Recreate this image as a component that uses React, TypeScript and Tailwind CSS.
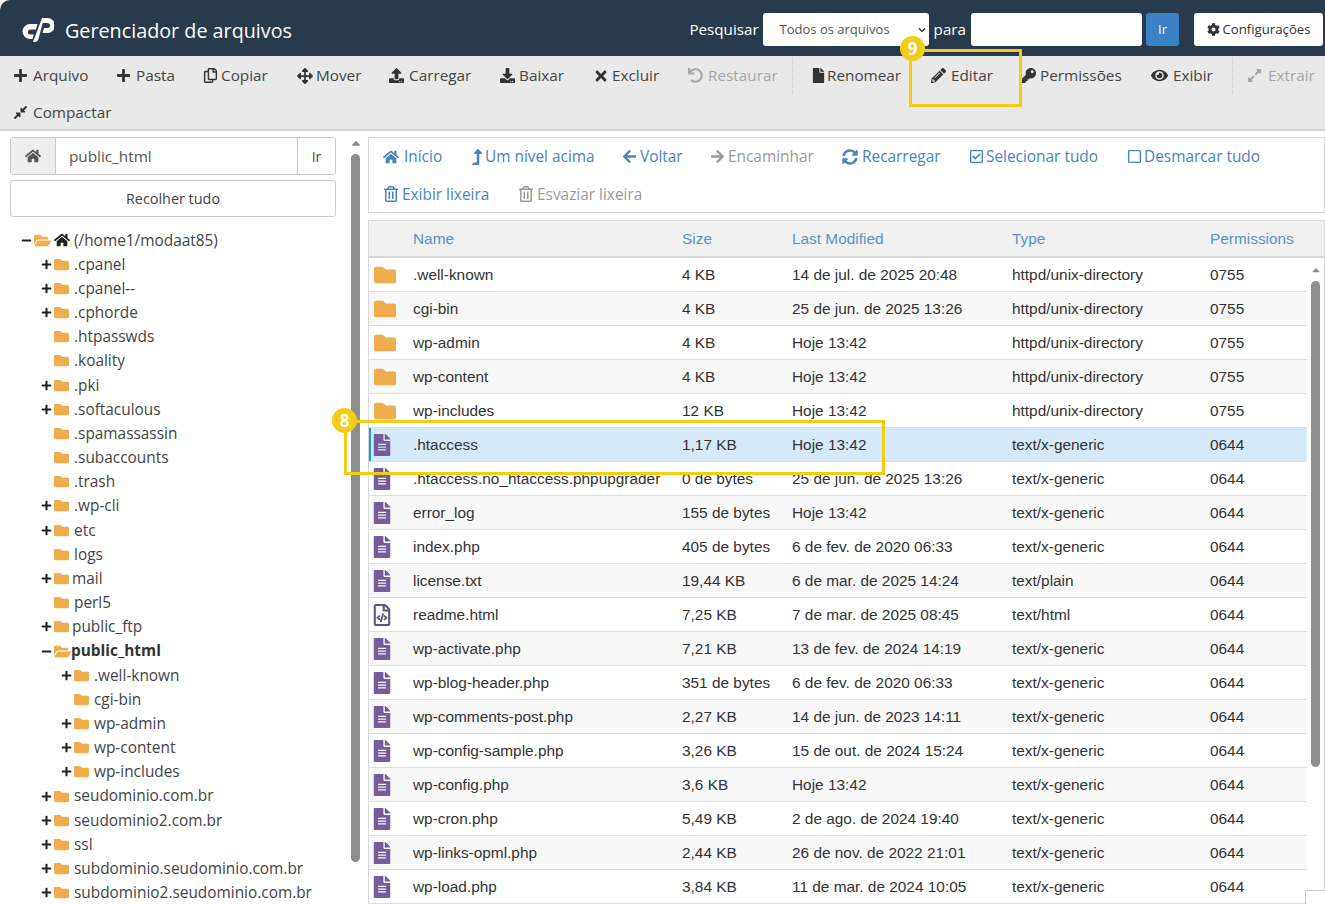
import React from "react";
import {
  FaPlus, FaRegCopy, FaArrowsAlt, FaUpload, FaDownload, FaTimes, FaUndo, FaFile, FaPencilAlt, FaKey, FaEye,
  FaExpandAlt, FaCompressAlt, FaCog, FaHome, FaLevelUpAlt, FaArrowLeft, FaArrowRight, FaSyncAlt, FaRegCheckSquare,
  FaRegSquare, FaRegTrashAlt, FaFolder, FaFolderOpen, FaFileAlt, FaRegFileCode, FaMinus, FaCaretUp, FaChevronDown,
} from "react-icons/fa";

const tools: { icon: React.ReactNode; label: string; w: string; slot: string; off?: boolean; sep?: boolean }[] = [
  { icon: <FaPlus />, label: "Arquivo", w: "w-[103px]", slot: "w-[20px] text-[15px]" },
  { icon: <FaPlus />, label: "Pasta", w: "w-[87px]", slot: "w-[20px] text-[15px]" },
  { icon: <FaRegCopy />, label: "Copiar", w: "w-[94px]", slot: "w-[18px] text-[15px]" },
  { icon: <FaArrowsAlt />, label: "Mover", w: "w-[92px]", slot: "w-[19px] text-[16px]" },
  { icon: <FaUpload />, label: "Carregar", w: "w-[111px]", slot: "w-[20px] text-[15px]" },
  { icon: <FaDownload />, label: "Baixar", w: "w-[94px]", slot: "w-[19px] text-[15px]" },
  { icon: <FaTimes />, label: "Excluir", w: "w-[94px]", slot: "w-[19px] text-[16px] -ml-[1px]" },
  { icon: <FaUndo />, label: "Restaurar", w: "w-[105px]", slot: "w-[20px] text-[15px]", off: true, sep: true },
  { icon: <FaFile />, label: "Renomear", w: "w-[138px] pl-[19px]", slot: "w-[16px] text-[15px] -ml-[1px]" },
  { icon: <FaPencilAlt />, label: "Editar", w: "w-[90px]", slot: "w-[20px] text-[15px]" },
  { icon: <FaKey />, label: "Permissões", w: "w-[130px]", slot: "w-[19px] text-[15px]" },
  { icon: <FaEye />, label: "Exibir", w: "w-[82px]", slot: "w-[22px] text-[17px]", sep: true },
  { icon: <FaExpandAlt />, label: "Extrair", w: "w-[80px] pl-[14px]", slot: "w-[21px] text-[15px]", off: true },
  { icon: <FaCompressAlt />, label: "Compactar", w: "w-[120px]", slot: "w-[20px] text-[15px]" },
];

const tree: { name: string; level: 0 | 1 | 2; state: "plus" | "minus" | "none"; bold?: boolean; home?: boolean; tight?: boolean }[] = [
  { name: "(/home1/modaat85)", level: 0, state: "minus", home: true },
  { name: ".cpanel", level: 1, state: "plus" },
  { name: ".cpanel--", level: 1, state: "plus" },
  { name: ".cphorde", level: 1, state: "plus" },
  { name: ".htpasswds", level: 1, state: "none" },
  { name: ".koality", level: 1, state: "none" },
  { name: ".pki", level: 1, state: "plus" },
  { name: ".softaculous", level: 1, state: "plus" },
  { name: ".spamassassin", level: 1, state: "none" },
  { name: ".subaccounts", level: 1, state: "none" },
  { name: ".trash", level: 1, state: "none" },
  { name: ".wp-cli", level: 1, state: "plus" },
  { name: "etc", level: 1, state: "plus" },
  { name: "logs", level: 1, state: "none" },
  { name: "mail", level: 1, state: "plus", tight: true },
  { name: "perl5", level: 1, state: "none" },
  { name: "public_ftp", level: 1, state: "plus", tight: true },
  { name: "public_html", level: 1, state: "minus", bold: true },
  { name: ".well-known", level: 2, state: "plus" },
  { name: "cgi-bin", level: 2, state: "none" },
  { name: "wp-admin", level: 2, state: "plus" },
  { name: "wp-content", level: 2, state: "plus" },
  { name: "wp-includes", level: 2, state: "plus" },
  { name: "seudominio.com.br", level: 1, state: "plus" },
  { name: "seudominio2.com.br", level: 1, state: "plus" },
  { name: "ssl", level: 1, state: "plus" },
  { name: "subdominio.seudominio.com.br", level: 1, state: "plus" },
  { name: "subdominio2.seudominio.com.br", level: 1, state: "plus" },
];

const D = "httpd/unix-directory";
const G = "text/x-generic";
const files: [string, string, string, string, string][] = [
  [".well-known", "4 KB", "14 de jul. de 2025 20:48", D, "0755"],
  ["cgi-bin", "4 KB", "25 de jun. de 2025 13:26", D, "0755"],
  ["wp-admin", "4 KB", "Hoje 13:42", D, "0755"],
  ["wp-content", "4 KB", "Hoje 13:42", D, "0755"],
  ["wp-includes", "12 KB", "Hoje 13:42", D, "0755"],
  [".htaccess", "1,17 KB", "Hoje 13:42", G, "0644"],
  [".htaccess.no_htaccess.phpupgrader", "0 de bytes", "25 de jun. de 2025 13:26", G, "0644"],
  ["error_log", "155 de bytes", "Hoje 13:42", G, "0644"],
  ["index.php", "405 de bytes", "6 de fev. de 2020 06:33", G, "0644"],
  ["license.txt", "19,44 KB", "6 de mar. de 2025 14:24", "text/plain", "0644"],
  ["readme.html", "7,25 KB", "7 de mar. de 2025 08:45", "text/html", "0644"],
  ["wp-activate.php", "7,21 KB", "13 de fev. de 2024 14:19", G, "0644"],
  ["wp-blog-header.php", "351 de bytes", "6 de fev. de 2020 06:33", G, "0644"],
  ["wp-comments-post.php", "2,27 KB", "14 de jun. de 2023 14:11", G, "0644"],
  ["wp-config-sample.php", "3,26 KB", "15 de out. de 2024 15:24", G, "0644"],
  ["wp-config.php", "3,6 KB", "Hoje 13:42", G, "0644"],
  ["wp-cron.php", "5,49 KB", "2 de ago. de 2024 19:40", G, "0644"],
  ["wp-links-opml.php", "2,44 KB", "26 de nov. de 2022 21:01", G, "0644"],
  ["wp-load.php", "3,84 KB", "11 de mar. de 2024 10:05", G, "0644"],
];

const nav: { icon: React.ReactNode; label: string; w: string; slot: string; off?: boolean }[] = [
  { icon: <FaHome />, label: "Início", w: "w-[87px]", slot: "w-[21px] text-[16px]" },
  { icon: <FaLevelUpAlt />, label: "Um nível acima", w: "w-[152px]", slot: "w-[15px] text-[16px] -ml-[1px] mr-[1px]" },
  { icon: <FaArrowLeft />, label: "Voltar", w: "w-[88px]", slot: "w-[18px] text-[15px]" },
  { icon: <FaArrowRight />, label: "Encaminhar", w: "w-[132px]", slot: "w-[18px] text-[15px]", off: true },
  { icon: <FaSyncAlt />, label: "Recarregar", w: "w-[127px]", slot: "w-[20px] text-[16px]" },
  { icon: <FaRegCheckSquare />, label: "Selecionar tudo", w: "w-[158px]", slot: "w-[17px] text-[15px]" },
  { icon: <FaRegSquare />, label: "Desmarcar tudo", w: "w-[140px]", slot: "w-[17px] text-[15px]" },
  { icon: <FaRegTrashAlt />, label: "Exibir lixeira", w: "w-[135px]", slot: "w-[19px] pl-[0px] text-[16px]" },
  { icon: <FaRegTrashAlt />, label: "Esvaziar lixeira", w: "w-[150px]", slot: "w-[19px] text-[16px]", off: true },
];

function Logo() {
  return (
    <svg width="32" height="24" viewBox="0 0 32 24" fill="white" className="mt-[3px] shrink-0" aria-hidden="true">
      <path d="M8 6h7.500l-1.600 5.500H8.500a2.500 2.500 0 0 0 0 5h3.300L10.500 21H8A7.500 7.500 0 0 1 8 6z" />
      <path d="M20 0h5.500a7.500 7.500 0 0 1 0 15h-5l1.500-5h3.500a2.500 2.500 0 0 0 0-5h-4.800L16.500 21A4 4 0 0 1 12.800 24H11z" />
    </svg>
  );
}

function FileIcon({ row }: { row: (typeof files)[number] }) {
  if (row[3] === D) return <FaFolder className="ml-[5px] text-[22px] text-[#f0ad4e]" />;
  if (row[3] === "text/html") return <FaRegFileCode className="ml-[2px] text-[22px] text-[#5d5680]" />;
  return <FaFileAlt className="ml-[2px] text-[22px] text-[#755d9b]" />;
}

export default function App() {
  return (
    <div className="relative h-[904px] w-[1325px] overflow-hidden bg-white font-['Open_Sans',sans-serif] text-[#444]">
      <header className="flex h-[56px] items-center rounded-tl-[10px] bg-[#293a4c] pr-[2px] pl-[22px] text-white">
        <Logo />
        <h1 className="mt-[5px] ml-[11px] text-[19.75px] leading-none">Gerenciador de arquivos</h1>
        <div className="mt-[3px] ml-auto flex items-center">
          <span className="mr-[4px] text-[15.2px]">Pesquisar</span>
          <div className="flex h-[33px] w-[166px] items-center justify-between rounded-[3px] bg-white pr-[3px] pl-[17px] text-[13px] text-[#555]">
            <span className="mt-[1px]">Todos os arquivos</span>
            <FaChevronDown className="text-[8px] text-[#333]" />
          </div>
          <span className="mx-[5px] text-[15.2px]">para</span>
          <div className="h-[33px] w-[171px] rounded-[3px] bg-white" />
          <div className="ml-[4px] flex h-[33px] w-[33px] items-center justify-center rounded-[3px] bg-[#3b82c4] text-[13px]">Ir</div>
          <div className="ml-[15px] flex h-[33px] w-[129px] items-center justify-center gap-[3px] rounded-[3px] bg-white text-[13.2px] text-[#333]">
            <FaCog className="text-[13px]" />
            Configurações
          </div>
        </div>
      </header>

      <nav className="flex h-[75px] flex-wrap content-start border-b-2 border-[#d5d5d5] bg-[#e9e9e9] pt-[1px] pl-[13px]">
        {tools.map((t) => (
          <div
            key={t.label}
            className={`flex h-[37px] items-center text-[15.3px] ${t.w} ${t.off ? "text-[#a5a5a5]" : "text-[#444]"} ${t.sep ? "border-r border-dotted border-[#c4c4c4]" : ""}`}
          >
            <span className={`${t.slot} shrink-0 ${t.off ? "text-[#a5a5a5]" : "text-[#333]"}`}>{t.icon}</span>
            {t.label}
          </div>
        ))}
      </nav>

      <main className="flex h-[773px]">
        <aside className="w-[346px] shrink-0 pt-[6px] pl-[10px]">
          <div className="flex h-[38px] w-[326px] rounded-[3px] border border-[#ccc]">
            <div className="flex w-[45px] items-center justify-center border-r border-[#ccc] bg-[#eee] text-[16px] text-[#555]">
              <FaHome />
            </div>
            <div className="flex flex-1 items-center pl-[13px] text-[15.3px] text-[#555]">public_html</div>
            <div className="flex w-[38px] items-center justify-center border-l border-[#ccc] text-[14px]">Ir</div>
          </div>
          <div className="mt-[5px] flex h-[37px] w-[326px] items-center justify-center rounded-[3px] border border-[#ccc] text-[14.4px]">
            Recolher tudo
          </div>
          <ul className="mt-[11px] text-[15.4px]">
            {tree.map((n) => (
              <li
                key={n.name + n.level}
                className={`flex h-[24.18px] items-center ${n.level === 0 ? "pl-[10px]" : n.level === 1 ? "pl-[30px]" : "pl-[50px]"}`}
              >
                <span className="flex w-[12px] shrink-0 justify-center text-[11px] text-[#222]">
                  {n.state === "plus" ? <FaPlus /> : n.state === "minus" ? <FaMinus /> : null}
                </span>
                {n.state === "minus" ? (
                  <FaFolderOpen className="ml-[2px] shrink-0 text-[17px] text-[#f0ad4e]" />
                ) : (
                  <FaFolder className="ml-[2px] shrink-0 text-[15px] text-[#f0ad4e]" />
                )}
                {n.home && <FaHome className="ml-[3px] shrink-0 text-[16px] text-[#222]" />}
                <span className={`whitespace-nowrap ${n.bold ? "font-bold text-[#333]" : n.home ? "ml-[4px]" : n.tight ? "ml-[3px]" : "ml-[5px]"}`}>{n.name}</span>
              </li>
            ))}
          </ul>
        </aside>

        <div className="flex w-[22px] shrink-0 flex-col items-center pt-[5px] pr-[6px] pl-[3px]">
          <FaCaretUp className="h-[14px] text-[14px] text-[#888]" />
          <div className="mt-[4px] h-[708px] w-[9px] rounded-[5px] bg-[#8e8e8e]" />
        </div>

        <section className="w-[957px] shrink-0 pt-[6px]">
          <div className="flex h-[76px] flex-wrap content-start border border-[#d8d8d8] pl-[14px] text-[15.4px]">
            {nav.map((n) => (
              <div
                key={n.label}
                className={`flex h-[37.5px] items-center ${n.w} ${n.off ? "text-[#9a9a9a]" : "text-[#4a84bd]"}`}
              >
                <span className={`${n.slot} shrink-0`}>{n.icon}</span>
                {n.label}
              </div>
            ))}
          </div>
          <div className="mt-[7px] flex h-[692px] overflow-hidden border border-[#d8d8d8] font-['Liberation_Sans',sans-serif] text-[15.4px] text-[#333]">
            <div className="w-[938px] shrink-0">
              <div className="flex h-[37px] w-[955px] items-center border-b-2 border-[#d8d8d8] bg-[#f1f1f1] pt-[1px] text-[#5b93c9]">
                <span className="w-[44px]" />
                <span className="w-[269px]">Name</span>
                <span className="w-[110px]">Size</span>
                <span className="w-[220px]">Last Modified</span>
                <span className="w-[198px]">Type</span>
                <span>Permissions</span>
              </div>
              {files.map((f, i) => {
                const sel = f[0] === ".htaccess";
                return (
                  <div
                    key={f[0]}
                    className={`flex h-[34px] items-center border-b border-[#ddd] ${sel ? "bg-[#d5e9f8] shadow-[inset_2px_0_0_#1d9bc5]" : i % 2 === 0 ? "bg-white" : "bg-[#f8f8f8]"}`}
                  >
                    <span className="flex w-[44px] items-center"><FileIcon row={f} /></span>
                    <span className="w-[269px] whitespace-nowrap">{f[0]}</span>
                    <span className="w-[110px]">{f[1]}</span>
                    <span className="w-[220px]">{f[2]}</span>
                    <span className="w-[198px]">{f[3]}</span>
                    <span>{f[4]}</span>
                  </div>
                );
              })}
            </div>
            <div className="flex flex-1 flex-col items-center pt-[43px]">
              <FaCaretUp className="h-[12px] text-[14px] text-[#888]" />
              <div className="mt-[5px] h-[486px] w-[9px] rounded-[5px] bg-[#8e8e8e]" />
            </div>
          </div>
        </section>
      </main>

      <div className="absolute top-[890px] left-[1305px] h-[14px] w-[20px] border-t border-l border-[#ccc] bg-white" />

      <div className="absolute top-[49px] left-[909px] h-[58px] w-[113px] border-[3.5px] border-[#f3cc17]" />
      <div className="absolute top-[36px] left-[900px] flex h-[25px] w-[25px] items-center justify-center rounded-full bg-[#f3cc17] text-[17px] font-bold text-white">9</div>
      <div className="absolute top-[420px] left-[344px] h-[55px] w-[541px] border-[3.5px] border-[#f3cc17]" />
      <div className="absolute top-[408px] left-[332px] flex h-[25px] w-[25px] items-center justify-center rounded-full bg-[#f3cc17] text-[17px] font-bold text-white">8</div>
    </div>
  );
}
